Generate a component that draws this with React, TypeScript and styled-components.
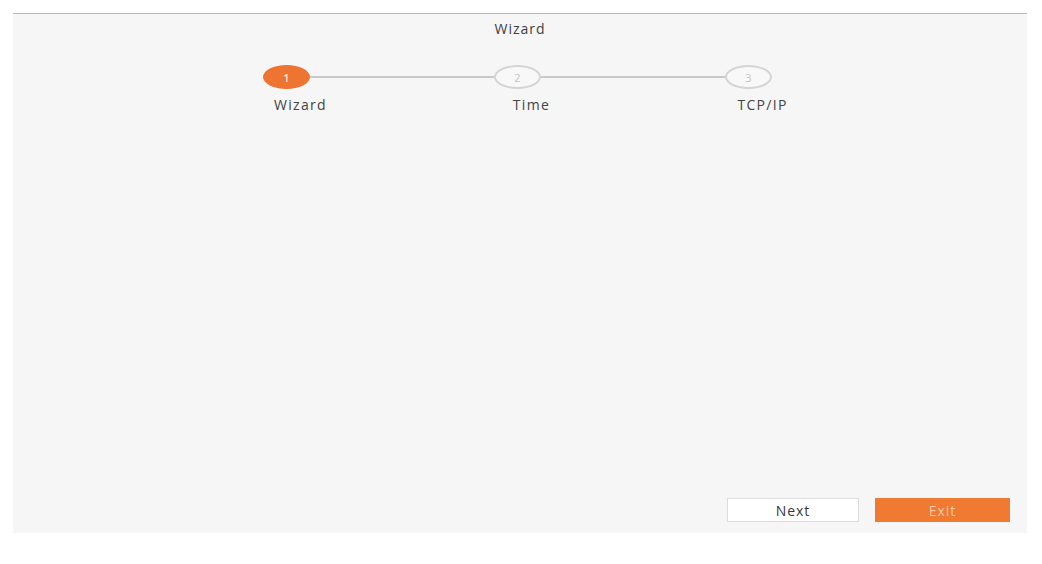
import React from 'react';
import styled, { createGlobalStyle } from 'styled-components';

const GlobalStyle = createGlobalStyle`
  html, body { margin: 0; padding: 0; background: #ffffff; }
  body { font-family: 'Open Sans', 'Liberation Sans', sans-serif; }
`;

const Page = styled.div`
  width: 1042px; height: 564px;
  padding: 13px 15px 0 13px;
  box-sizing: border-box;
`;

const Panel = styled.div`
  display: flex; flex-direction: column;
  height: 520px;
  background: #f5f6f5;
  border-top: 1px solid #b8b8b8;
  box-sizing: border-box;
`;

const Title = styled.div`
  margin-top: 5px;
  text-align: center;
  font-size: 14px; line-height: 19px;
  letter-spacing: 1px;
  color: #3f3f3f;
`;

const Stepper = styled.div`
  display: grid;
  grid-template-columns: 47px 1fr 47px 1fr 47px;
  row-gap: 7px;
  align-items: center;
  width: 509px;
  margin: 27px 0 0 250px;
`;

const Circle = styled.div<{ $active?: boolean }>`
  width: 47px; height: 24px;
  box-sizing: border-box;
  border-radius: 50%;
  display: flex; align-items: center; justify-content: center;
  font-size: 11px;
  font-weight: ${({ $active }) => ($active ? 600 : 400)};
  background: ${({ $active }) => ($active ? '#ee7431' : '#f8f8f8')};
  border: 2px solid ${({ $active }) => ($active ? '#ee7431' : '#d4d4d4')};
  color: ${({ $active }) => ($active ? '#fde6d8' : '#c4c4c4')};
`;

const Line = styled.div`
  height: 2px;
  background: #c9c9c9;
`;

const Label = styled.div<{ $col: number }>`
  grid-row: 2;
  grid-column: ${({ $col }) => $col};
  justify-self: center;
  margin-left: 28px;
  white-space: nowrap;
  font-size: 14px; line-height: 18px;
  letter-spacing: 1.3px;
  color: #444444;
`;

const Body = styled.div`flex: 1;`;

const Footer = styled.div`
  display: flex; justify-content: flex-end; gap: 16px;
  padding: 0 17px 11px 0;
`;

const Button = styled.button<{ $primary?: boolean }>`
  width: ${({ $primary }) => ($primary ? '135px' : '132px')};
  height: 24px;
  padding: 0;
  font-family: inherit;
  font-size: 14px;
  letter-spacing: 1px;
  background: ${({ $primary }) => ($primary ? '#f07a31' : '#ffffff')};
  color: ${({ $primary }) => ($primary ? '#f9c9a6' : '#383838')};
  border: 1px solid ${({ $primary }) => ($primary ? '#f07a31' : '#dcdcdc')};
`;

const steps = ['Wizard', 'Time', 'TCP/IP'];

export default function App() {
  return (
    <Page>
      <GlobalStyle />
      <Panel>
        <Title>Wizard</Title>
        <Stepper>
          <Circle $active>1</Circle>
          <Line />
          <Circle>2</Circle>
          <Line />
          <Circle>3</Circle>
          {steps.map((s, i) => (
            <Label key={s} $col={i * 2 + 1}>{s}</Label>
          ))}
        </Stepper>
        <Body />
        <Footer>
          <Button>Next</Button>
          <Button $primary>Exit</Button>
        </Footer>
      </Panel>
    </Page>
  );
}
